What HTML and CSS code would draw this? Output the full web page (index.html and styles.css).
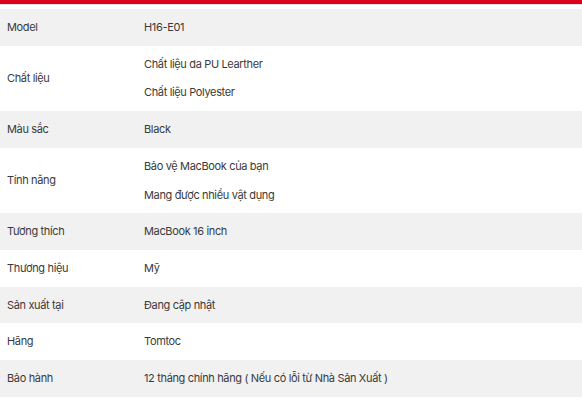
FILE: index.html
```html
<!DOCTYPE html>
<html lang="vi">
<head>
<meta charset="utf-8">
<link rel="stylesheet" href="styles.css">
</head>
<body>
<div class="topbar"></div>
<div class="specs">
  <div class="row"><div class="label">Model</div><div class="value"><p>H16-E01</p></div></div>
  <div class="row"><div class="label">Chất liệu</div><div class="value"><p>Chất liệu da PU Learther</p><p>Chất liệu Polyester</p></div></div>
  <div class="row"><div class="label">Màu sắc</div><div class="value"><p>Black</p></div></div>
  <div class="row"><div class="label">Tính năng</div><div class="value"><p>Bảo vệ MacBook của bạn</p><p>Mang được nhiều vật dụng</p></div></div>
  <div class="row"><div class="label">Tương thích</div><div class="value"><p>MacBook 16 inch</p></div></div>
  <div class="row"><div class="label">Thương hiệu</div><div class="value"><p>Mỹ</p></div></div>
  <div class="row"><div class="label">Sản xuất tại</div><div class="value"><p>Đang cập nhật</p></div></div>
  <div class="row"><div class="label">Hãng</div><div class="value"><p>Tomtoc</p></div></div>
  <div class="row"><div class="label">Bảo hành</div><div class="value"><p>12 tháng chính hãng ( Nếu có lỗi từ Nhà Sản Xuất )</p></div></div>
</div>
</body>
</html>
```
FILE: styles.css
```css
html, body {
  margin: 0;
  padding: 0;
  background: #fff;
}
body {
  font-family: Inter, "Noto Sans", sans-serif;
  font-size: 11px;
  letter-spacing: -0.35px;
  color: #3a3a3a;
}
.topbar {
  height: 4px;
  background: #dc001d;
  border-bottom: 1px solid #dbe3ea;
}
.specs {
  margin-top: 4px;
  display: flex;
  flex-direction: column;
}
.row {
  display: grid;
  grid-template-columns: 137px 1fr;
  align-items: center;
  padding: 10px 7px;
  line-height: 16.7px;
}
.row:nth-child(odd) {
  background: #f1f1f1;
}
.value {
  display: flex;
  flex-direction: column;
  gap: 12px;
}
.value p {
  margin: 0;
}
```
